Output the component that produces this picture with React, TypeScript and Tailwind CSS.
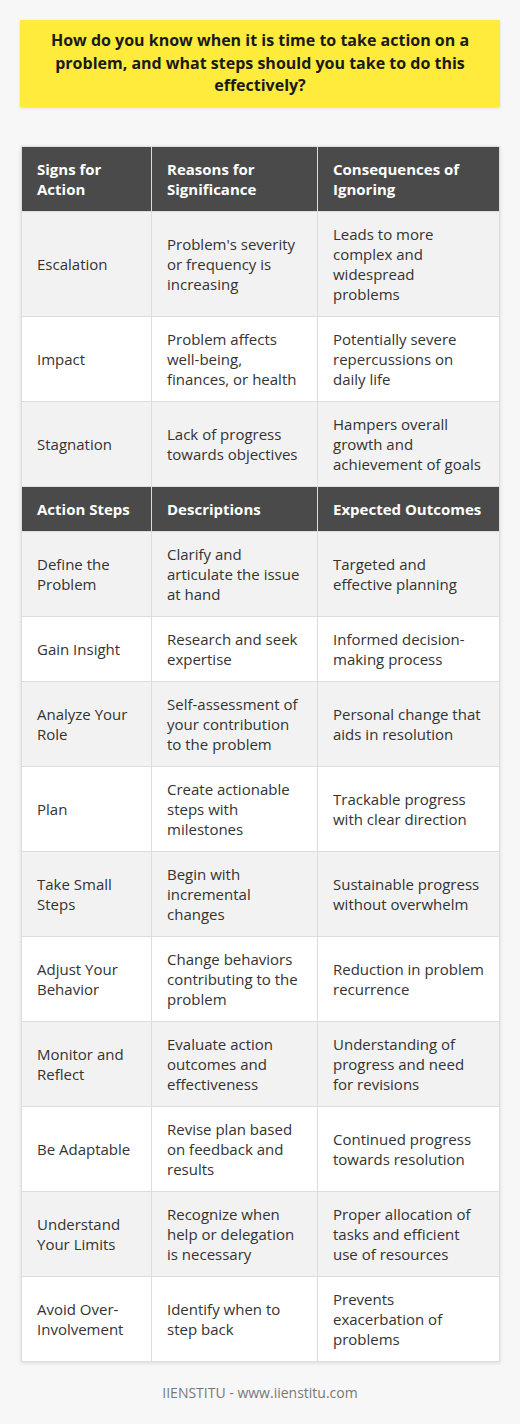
import React from 'react';

type Row = [string, string, string];

const signs: Row[] = [
  ['Escalation', "Problem's severity or frequency is increasing", 'Leads to more complex and widespread problems'],
  ['Impact', 'Problem affects well-being, finances, or health', 'Potentially severe repercussions on daily life'],
  ['Stagnation', 'Lack of progress towards objectives', 'Hampers overall growth and achievement of goals'],
];

const steps: Row[] = [
  ['Define the Problem', 'Clarify and articulate the issue at hand', 'Targeted and effective planning'],
  ['Gain Insight', 'Research and seek expertise', 'Informed decision-making process'],
  ['Analyze Your Role', 'Self-assessment of your contribution to the problem', 'Personal change that aids in resolution'],
  ['Plan', 'Create actionable steps with milestones', 'Trackable progress with clear direction'],
  ['Take Small Steps', 'Begin with incremental changes', 'Sustainable progress without overwhelm'],
  ['Adjust Your Behavior', 'Change behaviors contributing to the problem', 'Reduction in problem recurrence'],
  ['Monitor and Reflect', 'Evaluate action outcomes and effectiveness', 'Understanding of progress and need for revisions'],
  ['Be Adaptable', 'Revise plan based on feedback and results', 'Continued progress towards resolution'],
  ['Understand Your Limits', 'Recognize when help or delegation is necessary', 'Proper allocation of tasks and efficient use of resources'],
  ['Avoid Over-Involvement', 'Identify when to step back', 'Prevents exacerbation of problems'],
];

const cell = 'border border-[#dddddd] px-[15px] py-3 align-middle text-left';

const HeadRow = ({ cols }: { cols: Row }) => (
  <tr className="bg-[#4a4a4a] text-white font-bold">
    {cols.map((c) => (
      <th key={c} className={cell}>{c}</th>
    ))}
  </tr>
);

const BodyRows = ({ rows }: { rows: Row[] }) => (
  <>
    {rows.map((r, i) => (
      <tr key={r[0]} className={i % 2 === 0 ? 'bg-[#f2f2f2]' : 'bg-white'}>
        {r.map((c, j) => (
          <td key={j} className={cell}>{c}</td>
        ))}
      </tr>
    ))}
  </>
);

export default function App() {
  return (
    <div
      className="min-h-[1424px] bg-[#f7f7f7] px-5 pt-5 text-[#333333]"
      style={{ fontFamily: '"Open Sans", sans-serif' }}
    >
      <div className="bg-[#ffeb3b] px-6 pt-[9px] pb-[10px] text-center text-[16px] font-bold leading-[22.5px] text-[#1a1a1a] shadow-sm">
        How do you know when it is time to take action on a problem, and what steps should you take to do this effectively?
      </div>

      <table className="mt-[39px] ml-px w-[478px] table-fixed border-collapse text-[15px] leading-5 shadow-[0_1px_4px_rgba(0,0,0,0.12)]">
        <colgroup>
          <col className="w-[130px]" />
          <col className="w-[166px]" />
          <col className="w-[182px]" />
        </colgroup>
        <tbody>
          <HeadRow cols={['Signs for Action', 'Reasons for Significance', 'Consequences of Ignoring']} />
          <BodyRows rows={signs} />
          <HeadRow cols={['Action Steps', 'Descriptions', 'Expected Outcomes']} />
          <BodyRows rows={steps} />
        </tbody>
      </table>

      <div className="mt-[20px] text-center text-[14px] text-[#777777]">IIENSTITU - www.iienstitu.com</div>
    </div>
  );
}
